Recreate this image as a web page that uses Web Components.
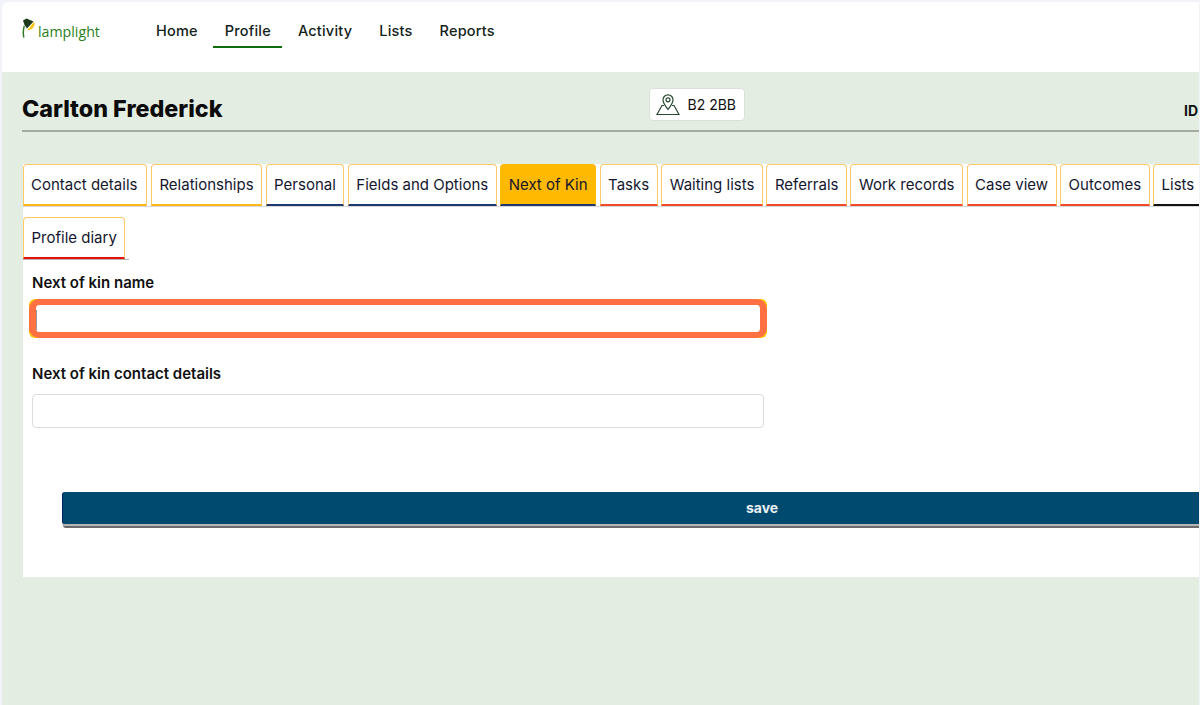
<!DOCTYPE html>
<html>
<head>
<meta charset="utf-8">
<style>
  html, body { margin: 0; height: 705px; overflow: hidden; background: #f1f3f8; }
  body { font-family: Inter, "Noto Sans", sans-serif; color: #111; }
</style>
</head>
<body>
<app-shell>
  <top-bar>
    <nav-link>Home</nav-link>
    <nav-link active>Profile</nav-link>
    <nav-link>Activity</nav-link>
    <nav-link>Lists</nav-link>
    <nav-link>Reports</nav-link>
  </top-bar>
  <profile-head name="Carlton Frederick" postcode="B2 2BB"></profile-head>
  <form-panel>
    <tab-row slot="tabs">
      <tab-item line="#ffb81c" wide>Contact details</tab-item>
      <tab-item line="#ffb81c">Relationships</tab-item>
      <tab-item line="#1f3a6e">Personal</tab-item>
      <tab-item line="#1f3a6e">Fields and Options</tab-item>
      <tab-item line="#1f3a6e" active>Next of Kin</tab-item>
      <tab-item line="#f4482a">Tasks</tab-item>
      <tab-item line="#f4482a">Waiting lists</tab-item>
      <tab-item line="#f4482a">Referrals</tab-item>
      <tab-item line="#f4482a">Work records</tab-item>
      <tab-item line="#f4482a">Case view</tab-item>
      <tab-item line="#f4482a">Outcomes</tab-item>
      <tab-item line="#111">Lists</tab-item>
    </tab-row>
    <tab-row slot="tabs" short>
      <tab-item line="#e8100c">Profile diary</tab-item>
    </tab-row>
    <text-field label="Next of kin name" focused></text-field>
    <text-field label="Next of kin contact details"></text-field>
    <save-button>save</save-button>
  </form-panel>
</app-shell>

<script>
class AppShell extends HTMLElement {
  constructor() {
    super();
    this.attachShadow({ mode: "open" });
    this.shadowRoot.innerHTML = `
    <style>
      :host {
        display: flex;
        flex-direction: column;
        width: 1197px;
        height: 703px;
        margin: 2px 0 0 2px;
        background: #e3ede2;
        border-top-left-radius: 6px;
        overflow: hidden;
      }
    </style>
    <slot></slot>`;
  }
}

class TopBar extends HTMLElement {
  constructor() {
    super();
    this.attachShadow({ mode: "open" });
    this.shadowRoot.innerHTML = `
    <style>
      :host {
        display: flex;
        flex: none;
        height: 70px;
        background: #fff;
        padding-left: 20px;
      }
      .logo {
        display: flex;
        align-items: flex-end;
        width: 78px;
        height: 22px;
        margin-top: 16px;
        margin-right: 42.5px;
        color: #2a7f1c;
        font-family: "Open Sans", sans-serif;
        font-size: 14.2px;
        line-height: 17px;
      }
      .logo svg { flex: none; margin: 0 0 2px 0; }
      nav { display: flex; }
    </style>
    <div class="logo">
      <svg width="16" height="20" viewBox="0 0 16 20">
        <path d="M1.8 19.5C1 16 1.2 12 2.2 8" fill="none" stroke="#2e7a26" stroke-width="1.5"/>
        <path d="M1 2.5 L4.5 0.5 L11.5 3.5 L5 10.5 L2.5 7 Z" fill="#1d3a1c"/>
        <path d="M12 4 C14.5 7 9.5 13 5.5 12 Z" fill="#ffc20e"/>
      </svg>
      <span>lamplight</span>
    </div>
    <nav><slot></slot></nav>`;
  }
}

class NavLink extends HTMLElement {
  constructor() {
    super();
    this.attachShadow({ mode: "open" });
    this.shadowRoot.innerHTML = `
    <style>
      :host {
        display: block;
        box-sizing: border-box;
        height: 46px;
        margin: 0 2px;
        padding: 20px 11.5px 0;
        font-size: 14.5px;
        font-weight: 500;
        letter-spacing: 0.2px;
        line-height: 18px;
        color: #14231a;
      }
      :host([active]) { border-bottom: 2px solid #0f6e0c; }
    </style>
    <slot></slot>`;
  }
}

class ProfileHead extends HTMLElement {
  constructor() {
    super();
    this.attachShadow({ mode: "open" });
  }

  connectedCallback() {
    const name = this.getAttribute("name");
    const postcode = this.getAttribute("postcode");
    this.shadowRoot.innerHTML = `
    <style>
      :host {
        display: block;
        flex: none;
        height: 92px;
        padding: 0 0 0 20px;
      }
      .row {
        position: relative;
        display: flex;
        box-sizing: border-box;
        height: 60px;
        border-bottom: 2px solid #a3aaa2;
      }
      h1 {
        margin: 22px 0 0;
        font-size: 23.3px;
        font-weight: 800;
        line-height: 30px;
        color: #0b0b0b;
      }
      .postcode {
        display: flex;
        align-items: center;
        gap: 8px;
        box-sizing: border-box;
        width: 96px;
        height: 33px;
        margin: 16px 0 0 426px;
        padding-left: 6px;
        background: #fff;
        border: 1px solid #dcdfdc;
        border-radius: 4px;
        font-size: 14px;
        color: #111;
      }
      .id {
        position: absolute;
        right: 0;
        top: 30px;
        width: 15px;
        overflow: hidden;
        font-size: 14px;
        font-weight: 700;
        line-height: 18px;
      }
    </style>
    <div class="row">
      <h1>${name}</h1>
      <div class="postcode">
        <svg width="24" height="24" viewBox="0 0 24 24" fill="none" stroke="#2b4a35" stroke-width="1.2">
          <path d="M12 16.5C9.5 13 7 10.5 7 6.8a5 5 0 0 1 10 0c0 3.7-2.5 6.2-5 9.7Z"/>
          <circle cx="12" cy="6.8" r="2"/>
          <path d="M8 12.5H6L1 21.5h22l-5-9h-2"/>
        </svg>
        <span>${postcode}</span>
      </div>
      <div class="id">ID</div>
    </div>`;
  }
}

class FormPanel extends HTMLElement {
  constructor() {
    super();
    this.attachShadow({ mode: "open" });
    this.shadowRoot.innerHTML = `
    <style>
      :host {
        display: block;
        flex: none;
        height: 413px;
        margin-left: 21px;
        background: #fff;
        overflow: hidden;
      }
      .body { padding: 0 0 0 9px; }
    </style>
    <slot name="tabs"></slot>
    <div class="body"><slot></slot></div>`;
  }
}

class TabRow extends HTMLElement {
  constructor() {
    super();
    this.attachShadow({ mode: "open" });
    this.shadowRoot.innerHTML = `
    <style>
      :host {
        display: flex;
        gap: 3.5px;
        width: max-content;
        min-width: 1176px;
        margin-bottom: 10px;
        border-bottom: 1px solid #d8d8d8;
      }
      :host([short]) {
        min-width: 0;
        padding-right: 4px;
        margin-bottom: 14px;
        border-bottom-color: #b5b5b5;
      }
    </style>
    <slot></slot>`;
  }
}

class TabItem extends HTMLElement {
  constructor() {
    super();
    this.attachShadow({ mode: "open" });
  }

  connectedCallback() {
    const line = this.getAttribute("line");
    this.shadowRoot.innerHTML = `
    <style>
      :host {
        display: block;
        flex: none;
        box-sizing: border-box;
        height: 42px;
        padding: 10px 7.5px 0;
        background: #fff;
        border: 1px solid #ffc966;
        border-bottom: 2px solid ${line};
        border-radius: 4px 4px 0 0;
        font-size: 15px;
        line-height: 19px;
        color: #14162e;
        white-space: nowrap;
      }
      :host([wide]) { padding: 10px 9px 0 7px; }
      :host([active]) { background: #ffb900; border-color: #ffb900; border-bottom-color: ${line}; }
    </style>
    <slot></slot>`;
  }
}

class TextField extends HTMLElement {
  constructor() {
    super();
    this.attachShadow({ mode: "open" });
  }

  connectedCallback() {
    const label = this.getAttribute("label");
    this.shadowRoot.innerHTML = `
    <style>
      :host { display: block; position: relative; width: 732px; height: 91px; }
      label {
        display: block;
        margin-bottom: 11px;
        font-size: 15px;
        font-weight: 600;
        line-height: 18px;
        color: #111;
      }
      input {
        display: block;
        position: relative;
        box-sizing: border-box;
        width: 100%;
        height: 34px;
        padding: 0 6px;
        background: #fff;
        border: 1px solid #dcdcdc;
        border-radius: 4px;
        outline: none;
      }
      :host([focused]) input {
        width: 738px;
        height: 39px;
        margin: -4px 0 0 -3px;
        border-style: solid;
        border-color: #ff7043;
        border-width: 6px 7px;
        border-radius: 10px;
      }
      .ring {
        position: absolute;
        left: -3px;
        top: 25px;
        width: 738px;
        height: 39px;
        background: #ffc400;
        border-radius: 6px;
      }
      .caret {
        position: absolute;
        left: 4px;
        top: 36px;
        width: 1px;
        height: 20px;
        background: #999;
      }
    </style>
    <label>${label}</label>
    ${this.hasAttribute("focused") ? '<div class="ring"></div>' : ""}
    <input type="text" aria-label="${label}">
    ${this.hasAttribute("focused") ? '<div class="caret"></div>' : ""}`;
  }
}

class SaveButton extends HTMLElement {
  constructor() {
    super();
    this.attachShadow({ mode: "open" });
    this.shadowRoot.innerHTML = `
    <style>
      :host {
        display: block;
        box-sizing: border-box;
        width: 1400px;
        height: 32px;
        margin: 36px 0 0 30px;
        padding-left: 683px;
        background: #004a70;
        border-left: 1px solid #001f66;
        border-radius: 3px 0 0 3px;
        box-shadow: 0 2px 0 #b5b5b5, 1px 4px 0 #6a6a6a;
        color: #eaf0f4;
        font-size: 14px;
        font-weight: 700;
        line-height: 32px;
      }
    </style>
    <slot></slot>`;
  }
}

customElements.define("app-shell", AppShell);
customElements.define("top-bar", TopBar);
customElements.define("nav-link", NavLink);
customElements.define("profile-head", ProfileHead);
customElements.define("form-panel", FormPanel);
customElements.define("tab-row", TabRow);
customElements.define("tab-item", TabItem);
customElements.define("text-field", TextField);
customElements.define("save-button", SaveButton);
</script>
</body>
</html>
